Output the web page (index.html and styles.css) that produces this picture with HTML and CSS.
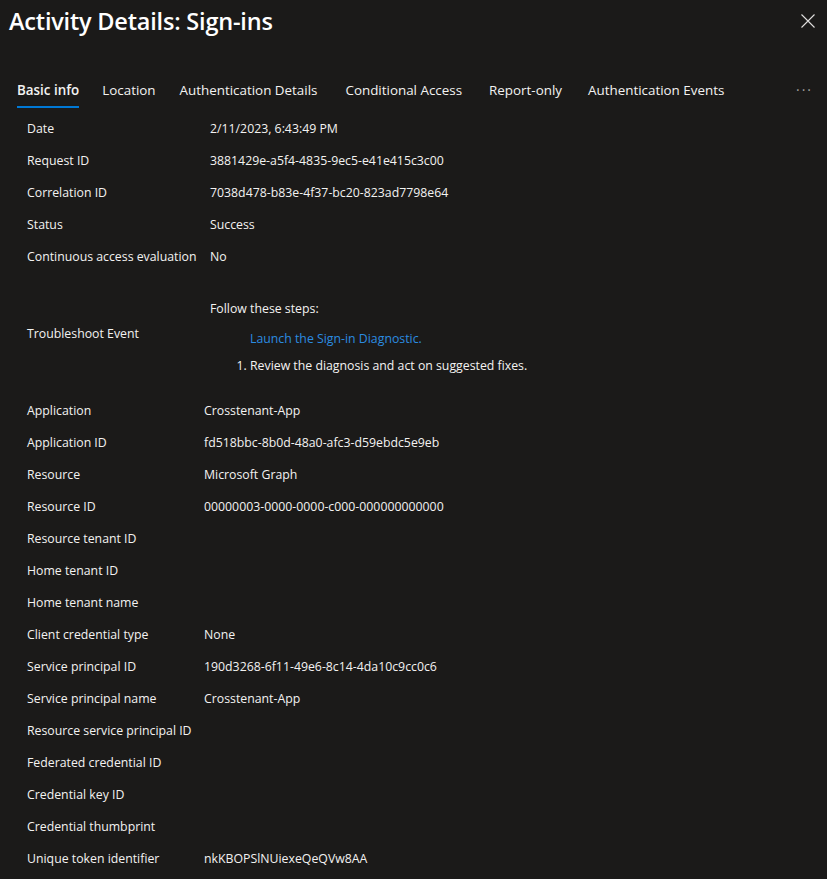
FILE: index.html
```html
<!DOCTYPE html>
<html lang="en">
<head>
<meta charset="utf-8">
<title>Activity Details: Sign-ins</title>
<link rel="stylesheet" href="styles.css">
</head>
<body>
<div class="panel">
  <header class="header">
    <h1 class="title">Activity Details: Sign-ins</h1>
    <button class="close" aria-label="Close">
      <svg width="14" height="14" viewBox="0 0 14 14"><path d="M0.5 0.5 L13.5 13.5 M13.5 0.5 L0.5 13.5" stroke="#e0dfde" stroke-width="1.1" fill="none"/></svg>
    </button>
  </header>
  <nav class="tabs">
    <span class="tab active">Basic info</span>
    <span class="tab">Location</span>
    <span class="tab">Authentication Details</span>
    <span class="tab">Conditional Access</span>
    <span class="tab">Report-only</span>
    <span class="tab">Authentication Events</span>
    <span class="more">&middot;&middot;&middot;</span>
  </nav>
  <div class="details first">
    <div class="label">Date</div><div class="value">2/11/2023, 6:43:49 PM</div>
    <div class="label">Request ID</div><div class="value">3881429e-a5f4-4835-9ec5-e41e415c3c00</div>
    <div class="label">Correlation ID</div><div class="value">7038d478-b83e-4f37-bc20-823ad7798e64</div>
    <div class="label">Status</div><div class="value">Success</div>
    <div class="label">Continuous access evaluation</div><div class="value">No</div>
  </div>
  <div class="trouble">
    <div class="label tlabel">Troubleshoot Event</div>
    <div class="steps">
      <div class="follow">Follow these steps:</div>
      <a class="link" href="#">Launch the Sign-in Diagnostic.</a>
      <ol class="list"><li>Review the diagnosis and act on suggested fixes.</li></ol>
    </div>
  </div>
  <div class="details second">
    <div class="label">Application</div><div class="value">Crosstenant-App</div>
    <div class="label">Application ID</div><div class="value">fd518bbc-8b0d-48a0-afc3-d59ebdc5e9eb</div>
    <div class="label">Resource</div><div class="value">Microsoft Graph</div>
    <div class="label">Resource ID</div><div class="value">00000003-0000-0000-c000-000000000000</div>
    <div class="label">Resource tenant ID</div><div class="value"></div>
    <div class="label">Home tenant ID</div><div class="value"></div>
    <div class="label">Home tenant name</div><div class="value"></div>
    <div class="label">Client credential type</div><div class="value">None</div>
    <div class="label">Service principal ID</div><div class="value">190d3268-6f11-49e6-8c14-4da10c9cc0c6</div>
    <div class="label">Service principal name</div><div class="value">Crosstenant-App</div>
    <div class="label">Resource service principal ID</div><div class="value"></div>
    <div class="label">Federated credential ID</div><div class="value"></div>
    <div class="label">Credential key ID</div><div class="value"></div>
    <div class="label">Credential thumbprint</div><div class="value"></div>
    <div class="label">Unique token identifier</div><div class="value">nkKBOPSlNUiexeQeQVw8AA</div>
  </div>
</div>
</body>
</html>
```
FILE: styles.css
```css
* { box-sizing: border-box; }
html, body { margin: 0; padding: 0; background: #1b1a19; }
body {
  font-family: "Open Sans", "Noto Sans", sans-serif;
  color: #f3f2f1;
  font-size: 12.3px;
  width: 827px;
  height: 879px;
  overflow: hidden;
}
.panel { padding: 0; }
.header {
  display: flex;
  justify-content: space-between;
  align-items: flex-start;
  padding: 4px 12px 0 9px;
  height: 72px;
}
.title {
  margin: 0;
  font-size: 23.5px;
  font-weight: 600;
  line-height: 34px;
  color: #ffffff;
  letter-spacing: -0.2px;
}
.close {
  background: none;
  border: 0;
  padding: 0;
  margin-top: 10px;
  width: 14px;
  height: 14px;
  display: block;
}
.close svg { display: block; }
.tabs {
  display: flex;
  align-items: center;
  height: 36px;
  padding-left: 17px;
  padding-right: 14px;
}
.tab {
  font-size: 13.4px;
  line-height: 36px;
  height: 36px;
  color: #f3f2f1;
  position: relative;
  white-space: nowrap;
}
.tab:nth-child(1) { font-weight: 600; margin-right: 23px; }
.tab:nth-child(2) { margin-right: 24px; }
.tab:nth-child(3) { margin-right: 28px; }
.tab:nth-child(4) { margin-right: 27px; }
.tab:nth-child(5) { margin-right: 26px; }
.tab.active::after {
  content: "";
  position: absolute;
  left: 0; right: 0;
  bottom: 0;
  height: 2px;
  background: #0078d4;
}
.more {
  margin-left: auto;
  color: #a19f9d;
  font-size: 14px;
  letter-spacing: 2px;
  line-height: 36px;
}
.details {
  display: grid;
  padding-left: 27px;
  grid-auto-rows: 32px;
  align-items: center;
}
.details.first { grid-template-columns: 183px 1fr; padding-top: 5px; }
.details.second { grid-template-columns: 177px 1fr; }
.label, .value { white-space: nowrap; line-height: 18px; }
.trouble {
  display: grid;
  grid-template-columns: 183px 1fr;
  padding-left: 27px;
  padding-top: 20px;
  padding-bottom: 19px;
  align-items: center;
}
.tlabel { align-self: center; margin-top: -2px; }
.steps { display: flex; flex-direction: column; }
.follow { line-height: 32px; }
.link {
  color: #2b8ce0;
  text-decoration: none;
  line-height: 20px;
  margin-top: 4px;
  padding-left: 40px;
}
.list {
  margin: 7px 0 0 0;
  padding-left: 40px;
  line-height: 20px;
}
```
